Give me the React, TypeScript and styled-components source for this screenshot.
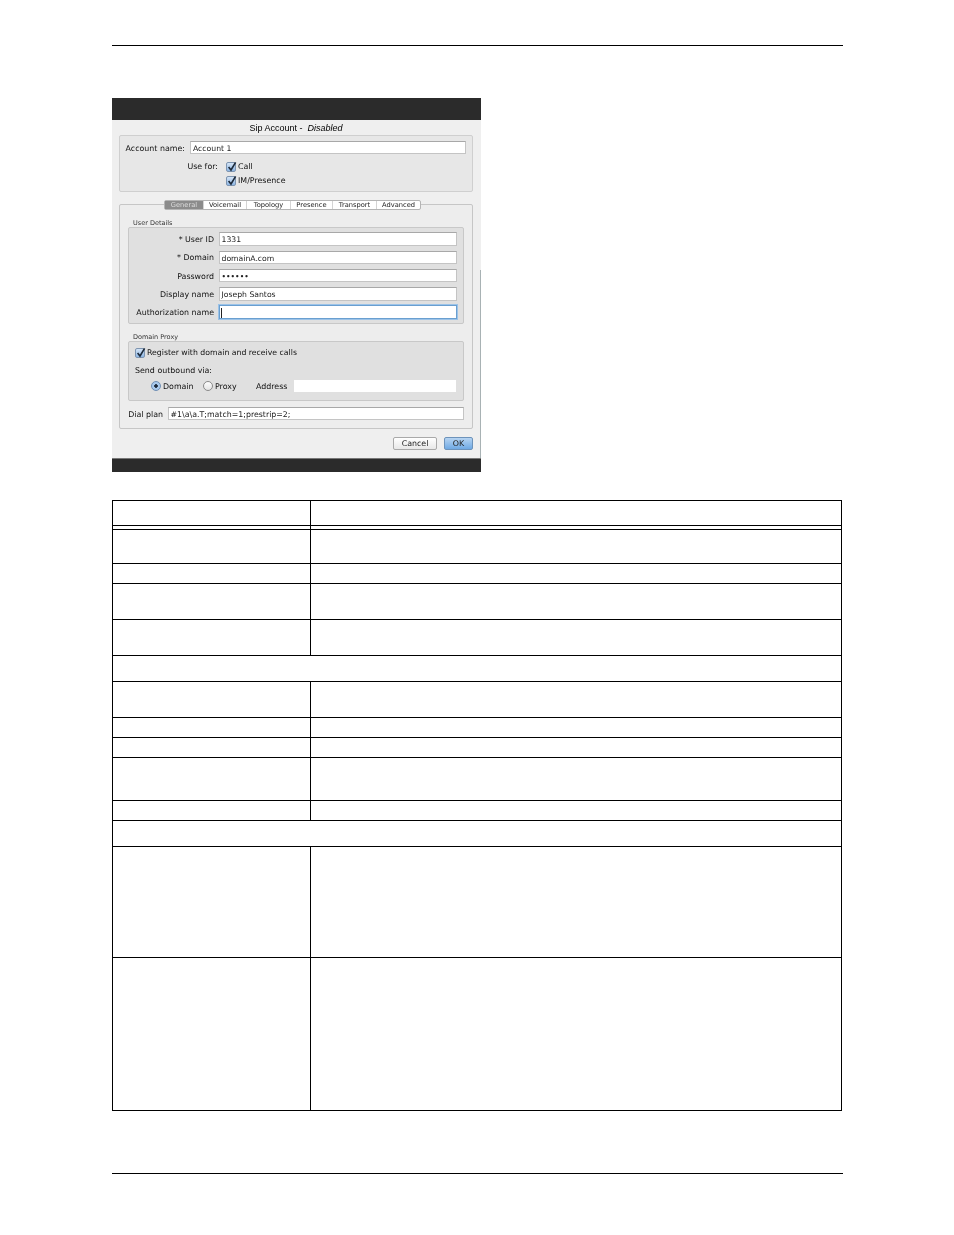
import React from "react";
import styled, { createGlobalStyle } from "styled-components";

const GlobalStyle = createGlobalStyle`
  html, body {
    margin: 0;
    padding: 0;
    background: #fff;
  }
`;

const Page = styled.div`
  width: 954px;
  height: 1235px;
  padding: 45px 0 0 112px;
  box-sizing: border-box;
  overflow: hidden;
  font-family: "DejaVu Sans", sans-serif;
`;

const Rule = styled.div<{ $top: number }>`
  width: 731px;
  height: 1px;
  background: #000;
  margin-top: ${(p) => p.$top}px;
`;

const Dialog = styled.div`
  position: relative;
  width: 369px;
  height: 374px;
  margin-top: 52px;
  background: #efefef;
  color: #111;
  font-size: 7.9px;
  line-height: 10px;
  filter: blur(0.35px);
  display: flex;
  flex-direction: column;

  /* thin scrollbar edge on the right of the window */
  &::after {
    content: "";
    position: absolute;
    right: 0;
    top: 172px;
    bottom: 14px;
    width: 1px;
    background: #a8b2b4;
  }
`;

const DarkBar = styled.div<{ $h: number }>`
  height: ${(p) => p.$h}px;
  flex: none;
  background: #2b2b2b;
  box-sizing: border-box;
`;

const BottomBar = styled(DarkBar)`
  border-top: 1px solid #777;
`;

const Body = styled.div`
  flex: 1;
  padding: 0 8px 0 7px;
  box-sizing: border-box;
`;

const Title = styled.div`
  height: 15px;
  line-height: 17px;
  text-align: center;
  font-family: "Liberation Sans", sans-serif;
  font-size: 9px;
  color: #000;
  em {
    margin-left: 5px;
  }
`;

const AccountBox = styled.div`
  width: 354px;
  height: 57px;
  box-sizing: border-box;
  border: 1px solid #cfcfcf;
  border-radius: 2px;
  background: #e7e7e7;
  padding-top: 5px;
`;

const Row = styled.div`
  display: flex;
  align-items: center;
`;

const AccountRow = styled(Row)`
  gap: 5px;
`;

const Label = styled.label<{ $w: number }>`
  width: ${(p) => p.$w}px;
  flex: none;
  padding-top: 2px;
  text-align: right;
  white-space: nowrap;
`;

const TextInput = styled.div<{ $w: number; $h?: number; $focus?: boolean; $fs?: number; $pad?: number }>`
  width: ${(p) => p.$w}px;
  height: ${(p) => p.$h ?? 13.5}px;
  line-height: ${(p) => (p.$h ?? 13.5) + 1}px;
  flex: none;
  box-sizing: border-box;
  padding-left: ${(p) => p.$pad ?? 1.5}px;
  font-size: ${(p) => p.$fs ?? 7.7}px;
  background: #fff;
  color: #222;
  border: 1px solid #c4c4c4;
  border-top-color: #a8a8a8;
  white-space: nowrap;
  ${(p) =>
    p.$focus &&
    `
    border: 1px solid #6a9fd0;
    box-shadow: 0 0 0 1px #9cc3e8;
  `}
`;

const Caret = styled.span`
  display: inline-block;
  width: 1px;
  height: 10px;
  background: #222;
  vertical-align: middle;
`;

const UseFor = styled.div`
  display: flex;
  margin-top: 7px;
`;

const UseForLabel = styled(Label)`
  margin-right: 8px;
  padding-top: 0;
  line-height: 12px;
`;

const CheckStack = styled.div`
  display: flex;
  flex-direction: column;
  gap: 3px;
`;

const CheckRow = styled.div`
  display: flex;
  align-items: center;
  gap: 2px;
  height: 11px;
`;

const CheckBox = styled.span`
  width: 10px;
  height: 10px;
  flex: none;
  box-sizing: border-box;
  border: 1px solid #7d94b0;
  border-radius: 2px;
  background: linear-gradient(#d4e4f6, #8db6e4);
  position: relative;
  svg {
    position: absolute;
    left: 0;
    top: -2px;
  }
`;

const Check = () => (
  <CheckBox>
    <svg width="10" height="11" viewBox="0 0 10 11">
      <path d="M1.6 6 L4 9 L8.6 1.4" fill="none" stroke="#1d2a3a" strokeWidth="1.6" />
    </svg>
  </CheckBox>
);

const TabBox = styled.div`
  width: 354px;
  height: 225px;
  margin-top: 12px;
  box-sizing: border-box;
  border: 1px solid #c6c6c6;
  border-radius: 2px;
  padding: 0 8px;
  background: #ededed;
`;

const Tabs = styled.div`
  display: flex;
  width: max-content;
  height: 10px;
  margin: -5px 0 0 36px;
  border-radius: 2px;
  border: 1px solid #b4b4b4;
  background: #fff;
  box-sizing: border-box;
  font-size: 6.7px;
`;

const Tab = styled.div<{ $w: number; $active?: boolean }>`
  width: ${(p) => p.$w}px;
  text-align: center;
  line-height: 8px;
  box-sizing: border-box;
  color: ${(p) => (p.$active ? "#dcdcdc" : "#222")};
  background: ${(p) => (p.$active ? "#8b8b8b" : "transparent")};
  border-left: ${(p) => (p.$active ? "0" : "1px solid #d4d4d4")};
`;

const SectionLabel = styled.div`
  height: 9px;
  line-height: 11px;
  margin: 8px 0 0 5px;
  font-size: 6.5px;
  color: #333;
`;

const Group = styled.div<{ $h: number }>`
  width: 336px;
  height: ${(p) => p.$h}px;
  box-sizing: border-box;
  border: 1px solid #c8c8c8;
  border-radius: 2px;
  background: #e0e0e0;
`;

const DetailsGrid = styled.div`
  display: grid;
  grid-template-columns: 85px 238px;
  grid-auto-rows: 14px;
  column-gap: 5px;
  row-gap: 4.25px;
  padding-top: 4px;
  align-items: center;
`;

const ProxyTop = styled(CheckRow)`
  padding: 5px 0 0 6px;
  font-size: 7.75px;
`;

const Outbound = styled.div`
  margin: 8px 0 0 6px;
  height: 10px;
`;

const ViaRow = styled(Row)`
  margin: 4px 0 0 22px;
  height: 12px;
`;

const Radio = styled.span<{ $on?: boolean }>`
  width: 10px;
  height: 10px;
  flex: none;
  box-sizing: border-box;
  border-radius: 50%;
  border: 1px solid ${(p) => (p.$on ? "#6e8fb5" : "#8a8a8a")};
  background: ${(p) =>
    p.$on
      ? "radial-gradient(circle, #1d2a3a 0 1.5px, #a9c9ec 2px)"
      : "linear-gradient(#fdfdfd, #e4e4e4)"};
  margin-right: 2px;
`;

const RadioText = styled.span<{ $w: number }>`
  width: ${(p) => p.$w}px;
  flex: none;
  padding-top: 2px;
`;

const AddressInput = styled.div`
  width: 162px;
  height: 12px;
  flex: none;
  margin-left: 7px;
  background: #fff;
`;

const DialRow = styled(Row)`
  margin-top: 6px;
  gap: 5px;
`;

const Buttons = styled.div`
  display: flex;
  justify-content: flex-end;
  gap: 7px;
  margin-top: 8px;
`;

const Button = styled.div<{ $w: number; $primary?: boolean }>`
  width: ${(p) => p.$w}px;
  height: 13px;
  line-height: 12px;
  box-sizing: border-box;
  text-align: center;
  border-radius: 2px;
  border: 1px solid ${(p) => (p.$primary ? "#6d93bb" : "#a9a9a9")};
  background: ${(p) =>
    p.$primary
      ? "linear-gradient(#b6d4f2, #6fa9e4)"
      : "linear-gradient(#fff, #e8e8e8)"};
  color: #222;
`;

const Table = styled.div`
  width: 730px;
  margin-top: 28px;
  box-sizing: border-box;
  border: 1px solid #000;
  border-bottom: 0;
`;

const TableRow = styled.div<{ $h: number }>`
  height: ${(p) => p.$h}px;
  box-sizing: border-box;
  border-bottom: 1px solid #000;
  display: grid;
  grid-template-columns: 197px 1fr;
`;

const SideCell = styled.div`
  border-right: 0;
`;

const MainCell = styled.div`
  border-left: 1px solid #000;
`;

const SpanRow = styled.div<{ $h: number }>`
  height: ${(p) => p.$h}px;
  box-sizing: border-box;
  border-bottom: 1px solid #000;
`;

const rows = [
  { h: 25 },
  { h: 4 },
  { h: 34 },
  { h: 20 },
  { h: 36 },
  { h: 36 },
  { h: 26, span: true },
  { h: 36 },
  { h: 20 },
  { h: 20 },
  { h: 43 },
  { h: 20 },
  { h: 26, span: true },
  { h: 111 },
  { h: 153 },
];

const tabs = [
  { name: "General", w: 38, active: true },
  { name: "Voicemail", w: 43 },
  { name: "Topology", w: 44 },
  { name: "Presence", w: 42 },
  { name: "Transport", w: 44 },
  { name: "Advanced", w: 44 },
];

export default function App() {
  return (
    <>
      <GlobalStyle />
      <Page>
        <Rule $top={0} />
        <Dialog>
          <DarkBar $h={22} />
          <Body>
            <Title>
              Sip Account -<em>Disabled</em>
            </Title>
            <AccountBox>
              <AccountRow>
                <Label $w={65}>Account name:</Label>
                <TextInput $w={276} $h={13} $pad={2}>
                  Account 1
                </TextInput>
              </AccountRow>
              <UseFor>
                <UseForLabel $w={98}>Use for:</UseForLabel>
                <CheckStack>
                  <CheckRow>
                    <Check />
                    Call
                  </CheckRow>
                  <CheckRow>
                    <Check />
                    IM/Presence
                  </CheckRow>
                </CheckStack>
              </UseFor>
            </AccountBox>
            <TabBox>
              <Tabs>
                {tabs.map((t) => (
                  <Tab key={t.name} $w={t.w} $active={t.active}>
                    {t.name}
                  </Tab>
                ))}
              </Tabs>
              <SectionLabel>User Details</SectionLabel>
              <Group $h={97}>
                <DetailsGrid>
                  <Label $w={85}>* User ID</Label>
                  <TextInput $w={238}>1331</TextInput>
                  <Label $w={85}>* Domain</Label>
                  <TextInput $w={238}>domainA.com</TextInput>
                  <Label $w={85}>Password</Label>
                  <TextInput $w={238}>••••••</TextInput>
                  <Label $w={85}>Display name</Label>
                  <TextInput $w={238}>Joseph Santos</TextInput>
                  <Label $w={85}>Authorization name</Label>
                  <TextInput $w={238} $focus $pad={0.5}>
                    <Caret />
                  </TextInput>
                </DetailsGrid>
              </Group>
              <SectionLabel>Domain Proxy</SectionLabel>
              <Group $h={60}>
                <ProxyTop>
                  <Check />
                  Register with domain and receive calls
                </ProxyTop>
                <Outbound>Send outbound via:</Outbound>
                <ViaRow>
                  <Radio $on />
                  <RadioText $w={40}>Domain</RadioText>
                  <Radio />
                  <RadioText $w={41}>Proxy</RadioText>
                  <RadioText $w={31}>Address</RadioText>
                  <AddressInput />
                </ViaRow>
              </Group>
              <DialRow>
                <Label $w={35}>Dial plan</Label>
                <TextInput $w={296} $h={13} $fs={7.85} $pad={1.5}>
                  #1\a\a.T;match=1;prestrip=2;
                </TextInput>
              </DialRow>
            </TabBox>
            <Buttons>
              <Button $w={44}>Cancel</Button>
              <Button $w={29} $primary>
                OK
              </Button>
            </Buttons>
          </Body>
          <BottomBar $h={14} />
        </Dialog>
        <Table>
          {rows.map((r, i) =>
            r.span ? (
              <SpanRow key={i} $h={r.h} />
            ) : (
              <TableRow key={i} $h={r.h}>
                <SideCell />
                <MainCell />
              </TableRow>
            )
          )}
        </Table>
        <Rule $top={62} />
      </Page>
    </>
  );
}
